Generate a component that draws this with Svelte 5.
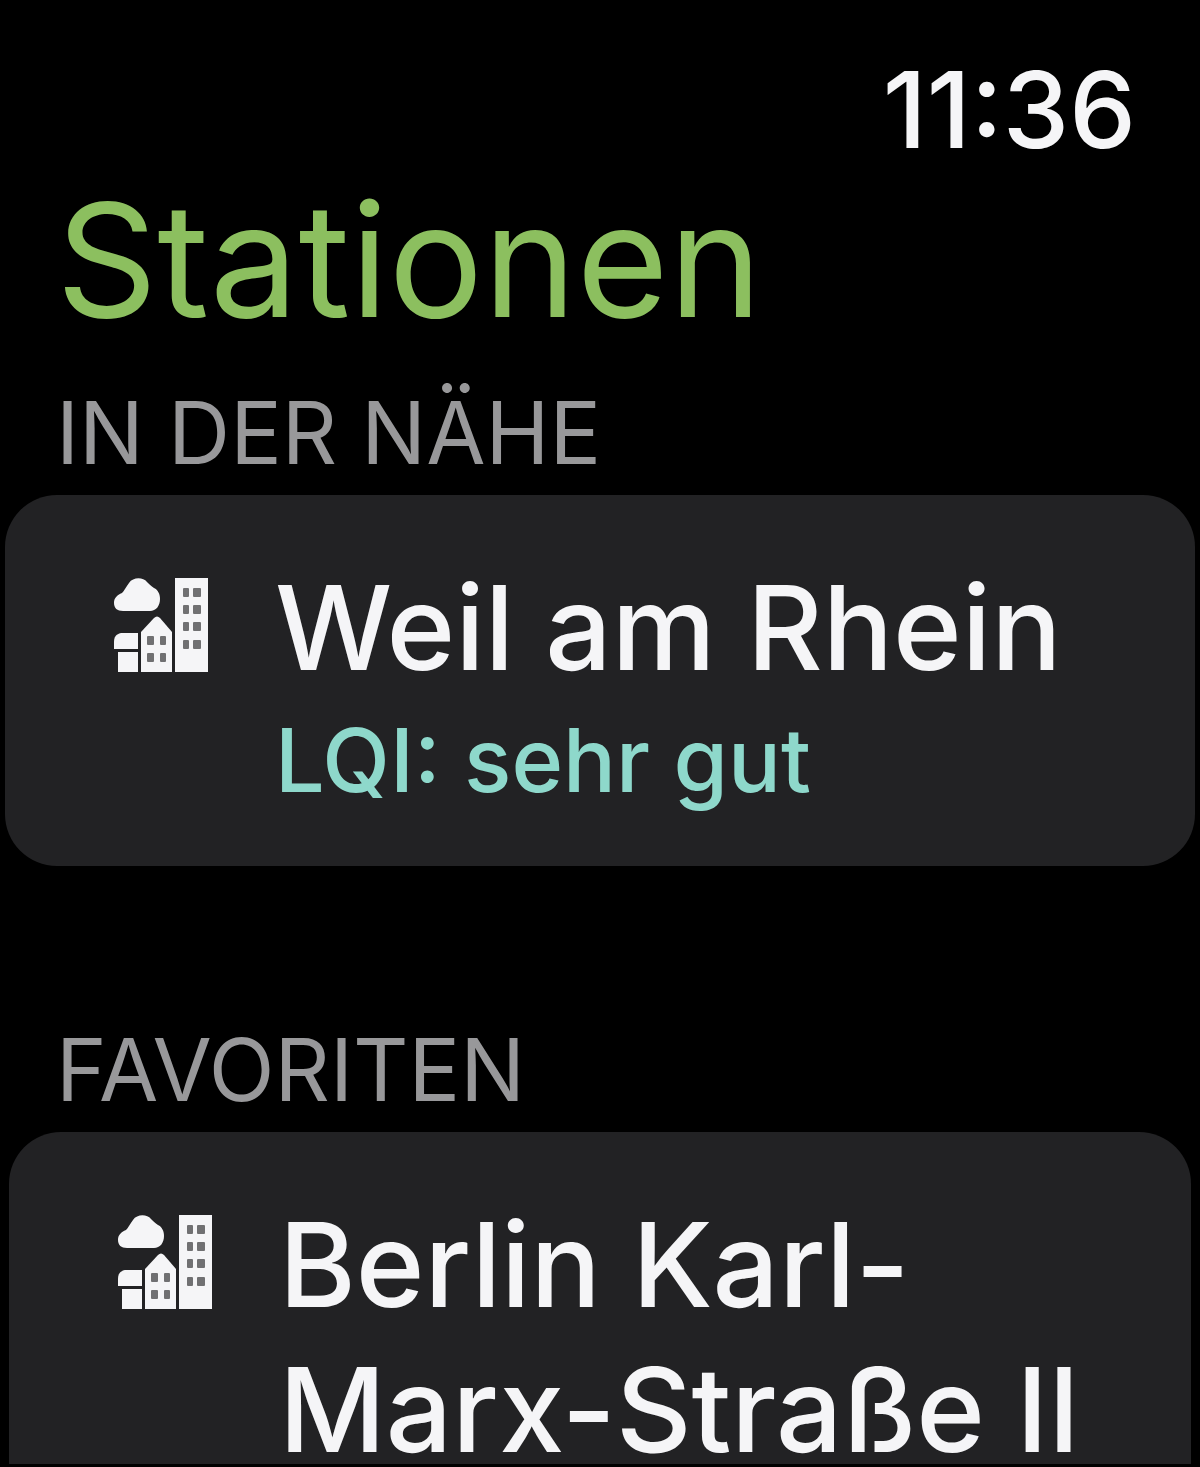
<script>
	let time = '11:36';

	let sections = [
		{
			id: 'nearby',
			title: 'In der Nähe',
			stations: [{ name: 'Weil am Rhein', lqi: 'sehr gut' }]
		},
		{
			id: 'favorites',
			title: 'Favoriten',
			stations: [{ name: 'Berlin Karl-Marx-Straße II' }]
		}
	];
</script>

<main class="screen">
	<header>
		<time>{time}</time>
		<h1>Stationen</h1>
	</header>

	{#each sections as section}
		<section class={section.id} aria-labelledby={section.id}>
			<h2 id={section.id}>{section.title}</h2>
			<div class="stations">
				{#each section.stations as station}
					<button class="station" type="button">
						<svg class="icon" viewBox="0 0 96 96" aria-hidden="true">
							<path
								d="M10 34C4 34 1 31 1 26C1 21 4 18 9 16C11 14 13 10 16 6C20 0 30 0 34 5C36 7 38 9 41 11C45 13 47 17 47 22C47 29 43 34 37 34Z"
							/>
							<path d="M8 56H25V72H1V65C1 60 3 57 8 56Z" />
							<path d="M5 75H25V95H5Z" />
							<path d="M28 55L41 41Q44 38 47 41L59 55V95H28Z" />
							<path d="M62 1H95V95H62Z" />
							<g class="windows">
								{#each [11, 28, 45, 63] as y}
									<rect x="70" {y} width="6" height="9" rx="1" />
									<rect x="80" {y} width="8" height="9" rx="1" />
								{/each}
								{#each [59, 76] as y}
									<rect x="34" {y} width="7" height="9" rx="1" />
									<rect x="47" {y} width="6" height="9" rx="1" />
								{/each}
							</g>
						</svg>
						<span class="text">
							<span class="name">{station.name}</span>
							{#if station.lqi}
								<span class="lqi">LQI: {station.lqi}</span>
							{/if}
						</span>
					</button>
				{/each}
			</div>
		</section>
	{/each}
</main>

<style>
	:global(body) {
		background: #000;
	}

	.screen {
		box-sizing: border-box;
		height: 100vh;
		overflow: hidden;
		border-bottom: 3px solid #000;
		font-family: Inter, Roboto, sans-serif;
		color: #f5f5f7;
	}

	header {
		display: flex;
		flex-direction: column;
		padding: 50px 64px 0 56px;
	}

	time {
		align-self: flex-end;
		font-size: 106px;
		font-weight: 500;
		line-height: 120px;
	}

	h1 {
		margin: 0;
		font-size: 158px;
		font-weight: 400;
		line-height: 180px;
		color: #8cbf5f;
	}

	h2 {
		margin: 0;
		padding: 33px 56px 12px;
		font-size: 86px;
		font-weight: 400;
		line-height: 100px;
		text-transform: uppercase;
		color: #98989a;
	}

	.nearby .stations {
		padding: 0 5px;
	}

	.favorites {
		padding-top: 121px;
	}

	.favorites .stations {
		padding: 0 9px;
	}

	.station {
		display: flex;
		align-items: flex-start;
		gap: 66px;
		width: 100%;
		padding: 60px 60px 56px 108px;
		border: 0;
		border-radius: 52px;
		background: #222224;
		color: inherit;
		font: inherit;
		text-align: left;
	}

	.icon {
		flex: none;
		width: 96px;
		height: 96px;
		margin-top: 22px;
		fill: currentColor;
	}

	.windows {
		fill: #707072;
	}

	.text {
		display: flex;
		flex-direction: column;
		gap: 10px;
	}

	.name {
		font-size: 117px;
		font-weight: 500;
		line-height: 145px;
	}

	.lqi {
		font-size: 88px;
		font-weight: 500;
		line-height: 100px;
		color: #8ed8cb;
	}
</style>
